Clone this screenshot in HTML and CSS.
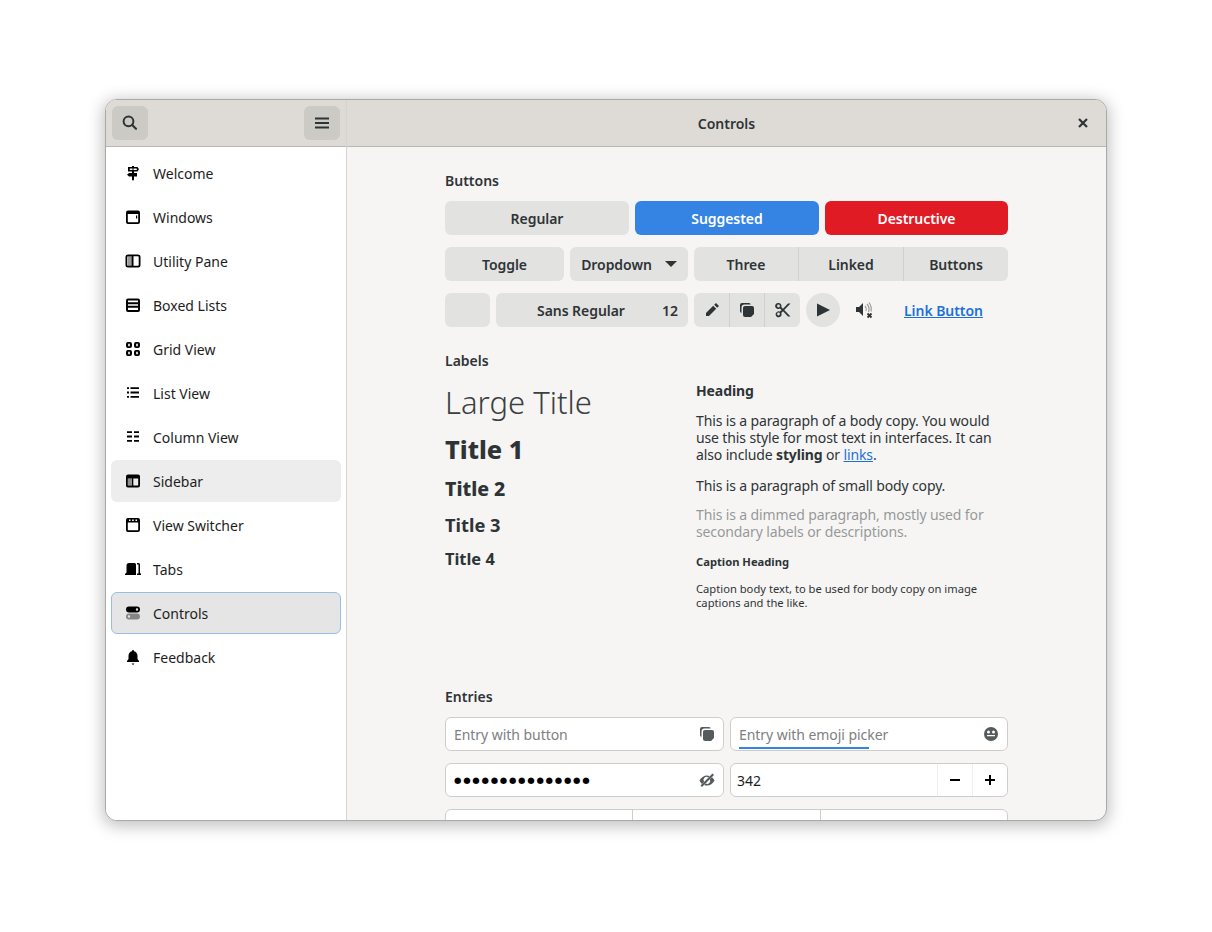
FILE: index.html
```html
<!DOCTYPE html>
<html lang="en">
<head>
    <meta charset="UTF-8">
    <title>Controls</title>
    <link rel="stylesheet" href="styles.css">
</head>
<body>
    <div class="window">
        <!-- sidebar -->
        <div class="side">
            <div class="side-head">
                <div class="head-btn">
                    <svg class="ico" viewBox="0 0 16 16"><circle cx="6.500" cy="6.300" r="4.900" fill="none" stroke="currentColor" stroke-width="2"/><path d="M10.200 10l3.800 3.800" stroke="currentColor" stroke-width="2.200" stroke-linecap="round"/></svg>
                </div>
                <div class="head-btn">
                    <svg class="ico" viewBox="0 0 16 16"><path d="M1 2.500h14v2H1zM1 7h14v2H1zM1 11.500h14v2H1z"/></svg>
                </div>
            </div>
            <div class="side-list">
                <div class="row">
                    <svg class="ico" viewBox="0 0 16 16"><path fill-rule="evenodd" d="M7 1h2v1h3.500l1.500 2.200-1.500 2.300H9V8h3v3.500H9v3a1 1 0 0 1-2 0v-3H4L2 9.700 4 8h3V6.500H3V2h4zM4.800 3.500v1.500h2.700V3.500zm3.700 0v1.500h3l.5-.8-.5-.7z"/></svg>
                    <span>Welcome</span>
                </div>
                <div class="row">
                    <svg class="ico" viewBox="0 0 16 16"><path fill-rule="evenodd" d="M3 1.500h10a2 2 0 0 1 2 2v9.500a2 2 0 0 1-2 2H3a2 2 0 0 1-2-2V3.500a2 2 0 0 1 2-2zM2.800 5v7.500a.7.700 0 0 0 .7.700h9a.7.700 0 0 0 .7-.700V5zm8.200 1.500h1.200v3H11z"/></svg>
                    <span>Windows</span>
                </div>
                <div class="row">
                    <svg class="ico" viewBox="0 0 16 16"><path d="M3 3h4v10H3z" opacity=".4"/><path fill-rule="evenodd" d="M3 1.500h10A2.500 2.500 0 0 1 15.500 4v8a2.500 2.500 0 0 1-2.500 2.500H3A2.500 2.500 0 0 1 .5 12V4A2.500 2.500 0 0 1 3 1.500zm0 1.800a.7.700 0 0 0-.7.700v8a.7.700 0 0 0 .7.700h3.700V3.300zm5.500 0v9.400H13a.7.700 0 0 0 .7-.700V4a.7.700 0 0 0-.7-.700z"/></svg>
                    <span>Utility Pane</span>
                </div>
                <div class="row">
                    <svg class="ico" viewBox="0 0 16 16"><path fill-rule="evenodd" d="M3 1.500h10A2 2 0 0 1 15 3.500v9.500a2 2 0 0 1-2 2H3a2 2 0 0 1-2-2V3.500a2 2 0 0 1 2-2zM3 3.500v1.800h10V3.500zm0 3.700v1.600h10V7.200zm0 3.500v2.300h10v-2.300z"/></svg>
                    <span>Boxed Lists</span>
                </div>
                <div class="row">
                    <svg class="ico" viewBox="0 0 16 16"><path fill-rule="evenodd" d="M3 1h2a2 2 0 0 1 2 2v2a2 2 0 0 1-2 2H3a2 2 0 0 1-2-2V3a2 2 0 0 1 2-2zm.2 1.800v2.400h1.600V2.800zM11 1h2a2 2 0 0 1 2 2v2a2 2 0 0 1-2 2h-2a2 2 0 0 1-2-2V3a2 2 0 0 1 2-2zm.2 1.800v2.400h1.600V2.800zM3 9h2a2 2 0 0 1 2 2v2a2 2 0 0 1-2 2H3a2 2 0 0 1-2-2v-2a2 2 0 0 1 2-2zm.2 1.800v2.400h1.600v-2.400zM11 9h2a2 2 0 0 1 2 2v2a2 2 0 0 1-2 2h-2a2 2 0 0 1-2-2v-2a2 2 0 0 1 2-2zm.2 1.800v2.400h1.600v-2.400z"/></svg>
                    <span>Grid View</span>
                </div>
                <div class="row">
                    <svg class="ico" viewBox="0 0 16 16"><path d="M2 2.200h2v1.800H2zM5.500 2.200H14v1.800H5.500zM2 6.600h2v1.800H2zM5.500 6.600H14v1.800H5.500zM2 11h2v1.800H2zM5.500 11H14v1.800H5.500z"/></svg>
                    <span>List View</span>
                </div>
                <div class="row">
                    <svg class="ico" viewBox="0 0 16 16"><path d="M2 2.200h5v1.800H2zM9 2.200h5v1.800H9zM2 6.600h5v1.800H2zM9 6.600h5v1.800H9zM2 11h5v1.800H2zM9 11h5v1.800H9z"/></svg>
                    <span>Column View</span>
                </div>
                <div class="row hover">
                    <svg class="ico" viewBox="0 0 16 16"><path d="M3 5.500h3.500v7H3z" opacity=".4"/><path fill-rule="evenodd" d="M3 1.500h10A2 2 0 0 1 15 3.500v9a2 2 0 0 1-2 2H3a2 2 0 0 1-2-2v-9a2 2 0 0 1 2-2zM2.800 5.500v7h4v-7zm5.500 0v7h4.900v-7z"/></svg>
                    <span>Sidebar</span>
                </div>
                <div class="row">
                    <svg class="ico" viewBox="0 0 16 16"><path fill-rule="evenodd" d="M3 1h10a2 2 0 0 1 2 2v10a2 2 0 0 1-2 2H3a2 2 0 0 1-2-2V3a2 2 0 0 1 2-2zM2.800 5.500v7a.7.700 0 0 0 .7.700h9a.7.700 0 0 0 .7-.700v-7zM4 2.500V4h1.500V2.500zm3.200 0V4h1.600V2.500zm3.300 0V4H12V2.500z"/></svg>
                    <span>View Switcher</span>
                </div>
                <div class="row">
                    <svg class="ico" viewBox="0 0 16 16"><path d="M4 2h5.500A1.500 1.500 0 0 1 11 3.500V14H0v-1l1.500-1.500V4.500A2.500 2.500 0 0 1 4 2zM12 2h1.500A1.500 1.500 0 0 1 15 3.500v8L16 13v1h-4v-1.500h1.500V3.500H12z"/></svg>
                    <span>Tabs</span>
                </div>
                <div class="row active">
                    <svg class="ico" viewBox="0 0 16 16"><path fill-rule="evenodd" d="M4 1.500h8a3 3 0 0 1 0 6H4a3 3 0 0 1 0-6zm8 1.800a1.200 1.200 0 1 0 0 2.400 1.200 1.200 0 0 0 0-2.400z"/><path fill-rule="evenodd" fill-opacity=".42" d="M4 8.500h8a3 3 0 0 1 0 6H4a3 3 0 0 1 0-6zm0 1.800a1.200 1.200 0 1 0 0 2.400 1.200 1.200 0 0 0 0-2.400z"/></svg>
                    <span>Controls</span>
                </div>
                <div class="row">
                    <svg class="ico" viewBox="0 0 16 16"><path d="M8 1a1 1 0 0 1 1 1v.3c2.300.5 3.500 2.300 3.500 4.700v3l1.500 2v1H2v-1l1.500-2V7c0-2.400 1.200-4.200 3.500-4.700V2a1 1 0 0 1 1-1zM6.500 14.500h3L8 16z"/></svg>
                    <span>Feedback</span>
                </div>
            </div>
        </div>

        <!-- main pane -->
        <div class="main">
            <div class="main-head">
                <span class="main-title">Controls</span>
                <svg class="close" viewBox="0 0 16 16"><path d="M4 4l8 8M12 4l-8 8" stroke="currentColor" stroke-width="2.200"/></svg>
            </div>
            <div class="content">
                <div class="col">
                    <div class="sec-title">Buttons</div>
                    <div class="btn-row three">
                        <div class="btn">Regular</div>
                        <div class="btn blue">Suggested</div>
                        <div class="btn red">Destructive</div>
                    </div>
                    <div class="btn-row">
                        <div class="btn toggle">Toggle</div>
                        <div class="btn dropdown">Dropdown <span class="arrow"></span></div>
                        <div class="linked grow">
                            <div class="btn">Three</div>
                            <div class="btn">Linked</div>
                            <div class="btn">Buttons</div>
                        </div>
                    </div>
                    <div class="btn-row">
                        <div class="btn color"></div>
                        <div class="btn font"><span class="font-name">Sans Regular</span><span>12</span></div>
                        <div class="linked">
                            <div class="btn icon">
                                <svg class="ico" viewBox="0 0 16 16"><path d="M12 1l3 3-1.800 1.800-3-3zM9.200 3.800l3 3L5 14H2v-3z"/></svg>
                            </div>
                            <div class="btn icon">
                                <svg class="ico" viewBox="0 0 16 16"><path d="M3 1h7a2 2 0 0 1 1.800 1.500H5.500a3 3 0 0 0-3 3V11A2 2 0 0 1 1 9V3a2 2 0 0 1 2-2z"/><path d="M6 4h7a2 2 0 0 1 2 2v6l-3 3H6a2 2 0 0 1-2-2V6a2 2 0 0 1 2-2z"/></svg>
                            </div>
                            <div class="btn icon">
                                <svg class="ico" viewBox="0 0 16 16"><path fill-rule="evenodd" d="M3.500 1a3 3 0 0 1 2.800 4L8 6.800 13 1.500h2.500L9.200 8l6.300 6.500H13L8 9.200 6.300 11a3 3 0 1 1-1.400-1.400L6.600 8 4.900 6.400A3 3 0 1 1 3.500 1zm0 1.600a1.400 1.400 0 1 0 0 2.800 1.400 1.400 0 0 0 0-2.800zm0 8a1.400 1.400 0 1 0 0 2.800 1.400 1.400 0 0 0 0-2.800z"/></svg>
                            </div>
                        </div>
                        <div class="btn round">
                            <svg class="ico" viewBox="0 0 16 16"><path d="M2 1.500L15 8 2 14.500z"/></svg>
                        </div>
                        <div class="volume">
                            <svg class="vol-ico" viewBox="0 0 18 18"><path d="M1 6h3l4-4v13l-4-4H1z" fill="#2e3436"/><path d="M10 5a5 5 0 0 1 1 5M12 3a8 8 0 0 1 1.500 8M14 1.500a11 11 0 0 1 2 9" fill="none" stroke="#9a9b9b" stroke-width="1.200"/><path d="M12.500 12.500l4 4M16.500 12.500l-4 4" stroke="#2e3436" stroke-width="1.800"/></svg>
                        </div>
                        <a class="link-btn">Link Button</a>
                    </div>

                    <div class="sec-title labels-title">Labels</div>
                    <div class="labels">
                        <div class="titles">
                            <div class="large-title">Large Title</div>
                            <div class="title-1">Title 1</div>
                            <div class="title-2">Title 2</div>
                            <div class="title-3">Title 3</div>
                            <div class="title-4">Title 4</div>
                        </div>
                        <div class="paras">
                            <div class="heading">Heading</div>
                            <p class="body">This is a paragraph of a body copy. You would use this style for most text in interfaces. It can also include <b>styling</b> or <a class="inline-link">links</a>.</p>
                            <p class="small">This is a paragraph of small body copy.</p>
                            <p class="dim">This is a dimmed paragraph, mostly used for secondary labels or descriptions.</p>
                            <div class="cap-head">Caption Heading</div>
                            <p class="caption">Caption body text, to be used for body copy on image captions and the like.</p>
                        </div>
                    </div>

                    <div class="sec-title entries-title">Entries</div>
                    <div class="entries">
                        <div class="entry">
                            <span class="ph">Entry with button</span>
                            <svg class="ico" viewBox="0 0 16 16"><path d="M3 1h7a2 2 0 0 1 1.800 1.500H5.500a3 3 0 0 0-3 3V11A2 2 0 0 1 1 9V3a2 2 0 0 1 2-2z"/><path d="M6 4h7a2 2 0 0 1 2 2v6l-3 3H6a2 2 0 0 1-2-2V6a2 2 0 0 1 2-2z"/></svg>
                        </div>
                        <div class="entry">
                            <span class="ph">Entry with emoji picker</span>
                            <svg class="ico" viewBox="0 0 16 16"><path fill-rule="evenodd" d="M8 1a7 7 0 1 1 0 14A7 7 0 0 1 8 1zM5.500 4.500a1.200 1.200 0 1 0 0 3 1.200 1.200 0 0 0 0-3zm5 0a1.200 1.200 0 1 0 0 3 1.200 1.200 0 0 0 0-3zM4 9v1.200h8V9z"/></svg>
                            <div class="progress"></div>
                        </div>
                        <div class="entry">
                            <span class="dots">●●●●●●●●●●●●●●●</span>
                            <svg class="ico" viewBox="0 0 16 16"><path d="M8 3.500c1 0 1.900.2 2.700.5L9.300 5.500A3 3 0 0 0 5.100 9.700l-2.200 2.200A10 10 0 0 1 .5 8.500C2 5.500 5 3.500 8 3.500zm5 1.700a10 10 0 0 1 2.500 3.300c-1.500 3-4.500 5-7.500 5-1 0-2-.2-2.800-.6l1.500-1.500a3 3 0 0 0 4.100-4.100z"/><path d="M13.500 1.500l1.500 1.500L3 15l-1.500-1.500z"/></svg>
                        </div>
                        <div class="entry spin">
                            <span class="val">342</span>
                            <div class="spin-btn"><svg class="ico" viewBox="0 0 16 16"><path d="M3 7h10v2H3z"/></svg></div>
                            <div class="spin-btn"><svg class="ico" viewBox="0 0 16 16"><path d="M7 3h2v4h4v2H9v4H7V9H3V7h4z"/></svg></div>
                        </div>
                    </div>
                    <div class="entry-group">
                        <div class="entry"></div>
                        <div class="entry"></div>
                        <div class="entry"></div>
                    </div>
                </div>
            </div>
        </div>
    </div>
</body>
</html>
```

FILE: styles.css
```css
*{
    margin: 0;
    padding: 0;
    box-sizing: border-box;
}

body{
    height: 932px;
    padding: 99px 105px 0;
    background-color: #fff;
    overflow: hidden;
    font: 14px/17px "Noto Sans", sans-serif;
    color: #2e3436;
}

/* window */
.window{
    width: 1002px;
    height: 722px;
    display: flex;
    border: 1px solid #a9a9a7;
    border-radius: 12px;
    overflow: hidden;
    box-shadow: 0 3px 16px 2px rgba(0,0,0,.25);
    background-color: #f6f5f4;
}

.ico{
    width: 16px;
    height: 16px;
    flex: none;
    fill: currentColor;
    display: block;
}

/* sidebar */
.side{
    width: 241px;
    flex: none;
    background-color: #fff;
    border-right: 1px solid #d5d3cf;
}
.side-head{
    height: 47px;
    padding: 6px;
    display: flex;
    justify-content: space-between;
    background-color: #dedbd6;
    border-bottom: 1px solid #b9b7b3;
}
.head-btn{
    width: 36px;
    height: 34px;
    display: flex;
    align-items: center;
    justify-content: center;
    border-radius: 6px;
    background-color: #cccac5;
}
.side-list{
    padding: 5px 5px;
    display: flex;
    flex-direction: column;
    gap: 2px;
}
.row{
    height: 42px;
    padding: 0 14px;
    display: flex;
    align-items: center;
    gap: 12px;
    border-radius: 6px;
    color: #1d1d1d;
}
.row.hover{
    background-color: #ededed;
}
.row.active{
    background-color: #e5e5e5;
    border: 1px solid #99bdea;
    padding: 0 13px;
}
.row .ico{
    color: #000;
}

/* main */
.main{
    flex: 1;
    min-width: 0;
    display: flex;
    flex-direction: column;
}
.main-head{
    height: 47px;
    flex: none;
    display: flex;
    align-items: center;
    background-color: #dedbd6;
    border-bottom: 1px solid #b9b7b3;
    position: relative;
}
.main-title{
    flex: 1;
    text-align: center;
    font-weight: 600;
}
.close{
    width: 16px;
    height: 16px;
    color: #2e3436;
    /* 压在标题栏右边 */
    position: absolute;
    right: 15px;
    top: 15px;
}
.content{
    flex: 1;
    overflow: hidden;
    display: flex;
    justify-content: center;
    padding-top: 25px;
}
.col{
    width: 563px;
}

.sec-title{
    font-weight: 600;
    margin-bottom: 12px;
}

/* buttons */
.btn-row{
    display: flex;
    gap: 6px;
    margin-bottom: 12px;
}
.btn-row.three{
    display: grid;
    grid-template-columns: 184px 184px 1fr;
}
.btn{
    height: 34px;
    display: flex;
    align-items: center;
    justify-content: center;
    background-color: #e2e2e1;
    border-radius: 6px;
    font-weight: 600;
    letter-spacing: -.05px;
    color: #2e3436;
}
.btn.blue{
    background-color: #3584e4;
    color: #fff;
}
.btn.red{
    background-color: #e01b24;
    color: #fff;
}
.toggle{
    width: 119px;
}
.dropdown{
    width: 118px;
    gap: 13px;
}
.arrow{
    width: 0;
    height: 0;
    border-left: 6px solid transparent;
    border-right: 6px solid transparent;
    border-top: 6px solid #2e3436;
}
.linked{
    display: flex;
}
.linked.grow{
    flex: 1;
}
.linked.grow .btn{
    flex: 1;
}
.linked .btn{
    border-radius: 0;
    border-left: 1px solid #d0d0cf;
}
.linked .btn:first-child{
    border-left: 0;
    border-radius: 6px 0 0 6px;
}
.linked .btn:last-child{
    border-radius: 0 6px 6px 0;
}
.color{
    width: 45px;
}
.font{
    width: 192px;
    padding: 0 10px 0 41px;
    justify-content: space-between;
}
.btn.icon{
    width: 35px;
}
.linked .btn.icon:last-child{
    width: 36px;
}
.round{
    width: 34px;
    border-radius: 50%;
}
.volume{
    width: 48px;
    display: flex;
    align-items: center;
    justify-content: center;
    margin-left: -6px;
}
.vol-ico{
    width: 18px;
    height: 18px;
    display: block;
}
.link-btn{
    height: 34px;
    margin-left: 10px;
    padding-top: 1px;
    line-height: 33px;
    font-weight: 600;
    letter-spacing: -.05px;
    color: #1c71d8;
    text-decoration: underline;
}

/* labels */
.labels-title{
    margin-top: 25px;
    margin-bottom: 0;
}
.labels{
    display: flex;
    height: 319px;
    padding-top: 5px;
}
.titles{
    width: 251px;
    flex: none;
}
.large-title{
    font-size: 31px;
    font-weight: 300;
    line-height: 36px;
    margin-top: 10px;
    color: #3a4042;
}
.title-1{
    font-size: 25.300px;
    font-weight: 800;
    line-height: 34px;
    margin-top: 12px;
}
.title-2{
    font-size: 19.500px;
    font-weight: 800;
    line-height: 28px;
    margin-top: 9px;
}
.title-3{
    font-size: 18.300px;
    font-weight: 700;
    line-height: 24px;
    margin-top: 10px;
}
.title-4{
    font-size: 16.400px;
    font-weight: 700;
    line-height: 20px;
    margin-top: 12px;
}
.paras{
    flex: 1;
    padding-top: 8px;
}
.heading{
    font-weight: 700;
    letter-spacing: -.1px;
    margin-bottom: 13px;
}
.paras p{
    letter-spacing: -.13px;
}
.paras .body{
    margin-bottom: 14px;
}
.paras .small{
    margin-bottom: 12px;
}
.inline-link{
    color: #1c71d8;
    text-decoration: underline;
}
.paras .dim{
    opacity: .48;
    margin-bottom: 15px;
}
.cap-head{
    font-size: 11.200px;
    font-weight: 700;
    line-height: 14px;
    margin-bottom: 13px;
}
.paras .caption{
    font-size: 11.200px;
    letter-spacing: 0;
    line-height: 14px;
}

/* entries */
.entries-title{
    margin-top: 0;
}
.entries{
    display: grid;
    grid-template-columns: 279px 278px;
    gap: 12px 6px;
    margin-bottom: 12px;
}
.entry{
    height: 34px;
    padding: 0 8px;
    display: flex;
    align-items: center;
    justify-content: space-between;
    background-color: #fff;
    border: 1px solid #cfcecc;
    border-radius: 6px;
    position: relative;
}
.entry .ico{
    color: #555a5c;
}
.ph{
    color: #7e8082;
    letter-spacing: -.05px;
}
.dots{
    font: 8.500px/17px "DejaVu Sans", sans-serif;
    letter-spacing: 1.740px;
    color: #000;
}
.progress{
    height: 2px;
    width: 130px;
    background-color: #3584e4;
    /* 进度条压在输入框底边 */
    position: absolute;
    left: 8px;
    bottom: 1px;
}
.spin{
    padding: 0;
}
.val{
    flex: 1;
    padding-left: 6px;
    color: #1d1d1d;
}
.spin-btn{
    width: 35px;
    height: 32px;
    display: flex;
    align-items: center;
    justify-content: center;
    border-left: 1px solid #efefef;
}
.spin-btn .ico{
    color: #000;
}
.entry-group{
    display: grid;
    grid-template-columns: 186px 188px 1fr;
    background-color: #fff;
    border: 1px solid #cfcecc;
    border-radius: 6px;
    height: 34px;
}
.entry-group .entry{
    border: 0;
    border-left: 1px solid #cfcecc;
    border-radius: 0;
    background-color: transparent;
    height: 32px;
}
.entry-group .entry:first-child{
    border-left: 0;
}
```
